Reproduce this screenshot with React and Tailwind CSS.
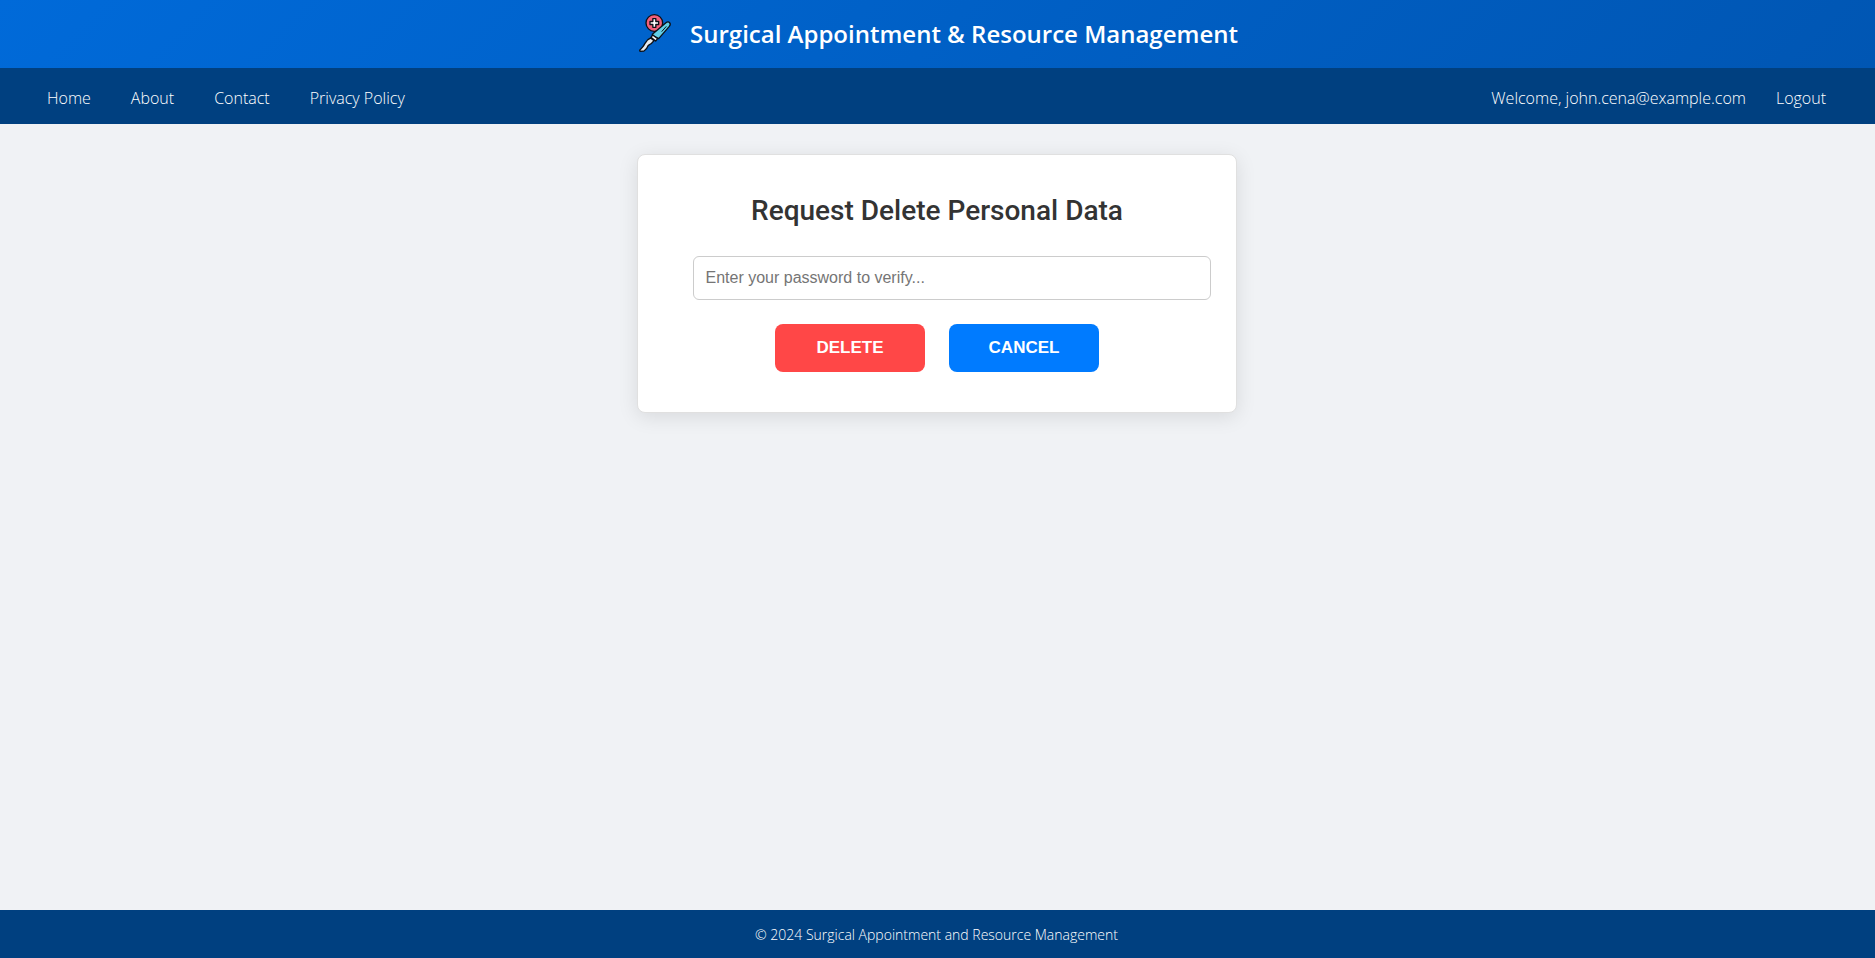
const navLinks = ["Home", "About", "Contact", "Privacy Policy"];

function Logo() {
  return (
    <svg className="mb-0.5 h-10 w-10 shrink-0 overflow-visible" viewBox="0 0 120 120" fill="none" stroke="#0c1016" strokeWidth="4" strokeLinejoin="round">
      <circle cx="70" cy="30" r="25" fill="#f2607a" />
      <path d="M65.500 17h9v8.500H83v9h-8.500V43h-9v-8.500H57v-9h8.500z" fill="#fff" />
      <path d="M104 30q7-6 12-1 4 4-1 11L83 77 66 68 64 64z" fill="#62cfe6" />
      <path d="M106 40 92 56" strokeWidth="3" />
      <path d="M65 66l15 11-6 7-14-11z" fill="#fff" />
      <path d="M59 75l10 8q-7 10-17 14-5 13-13 17l-12 1-1-3q13-13 16-21 6-12 17-16z" fill="#e9ebee" />
    </svg>
  );
}

export default function App() {
  return (
    <div className="flex h-screen flex-col bg-[#f0f2f5] font-['Open_Sans',sans-serif]">
      <header className="flex h-[68px] shrink-0 items-center justify-center bg-[linear-gradient(135deg,#006ad9,#0056b3)] pr-1.5">
        <Logo />
        <h1 className="ml-[19px] text-2xl font-semibold whitespace-nowrap text-white">Surgical Appointment &amp; Resource Management</h1>
      </header>
      <nav className="flex h-14 shrink-0 items-center justify-between bg-[#004080] pt-[3px] pr-[49px] pl-[47px] font-light text-white">
        <ul className="flex gap-10">
          {navLinks.map((label) => (
            <li key={label}><a href="#">{label}</a></li>
          ))}
        </ul>
        <div className="flex gap-[30px]">
          <span>Welcome, john.cena@example.com</span>
          <a href="#">Logout</a>
        </div>
      </nav>
      <main className="grow pt-[30px] pr-px">
        <section className="mx-auto h-[259px] w-[600px] rounded-lg border border-[#e0e0e0] bg-white pt-[35px] shadow-[0_4px_20px_rgba(0,0,0,0.1)]">
          <h2 className="text-center font-['Roboto',sans-serif] text-[28px] leading-[42px] font-medium text-[#333]">Request Delete Personal Data</h2>
          <input
            type="password"
            placeholder="Enter your password to verify..."
            className="mt-6 ml-[55px] block h-11 w-[518px] rounded-md border border-[#ccc] px-[11.5px] font-['Liberation_Sans',sans-serif] text-base placeholder:text-[#757575]"
          />
          <div className="mt-6 flex justify-center gap-6 font-['Liberation_Sans',sans-serif] text-[17px] font-bold text-white">
            <button className="h-12 w-[150px] rounded-lg bg-[#ff4747]">DELETE</button>
            <button className="h-12 w-[150px] rounded-lg bg-[#007bff]">CANCEL</button>
          </div>
        </section>
      </main>
      <footer className="flex h-12 shrink-0 items-center justify-center bg-[#004080] pt-0.5 pr-0.5 text-sm font-light text-white">
        © 2024 Surgical Appointment and Resource Management
      </footer>
    </div>
  );
}
